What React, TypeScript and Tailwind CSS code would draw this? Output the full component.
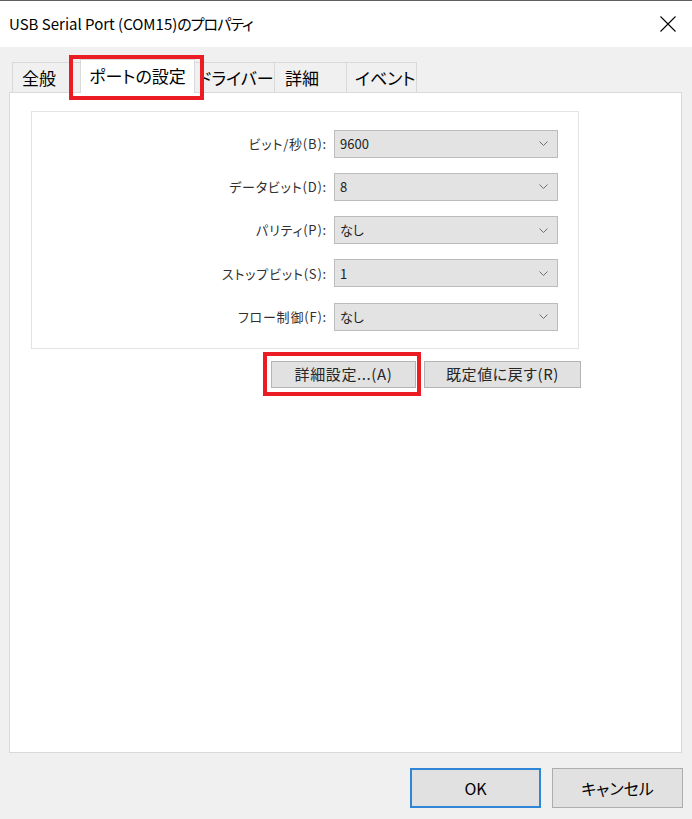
const rows = [
  { label: "ビット/秒(B):", value: "9600" },
  { label: "データビット(D):", value: "8" },
  { label: "パリティ(P):", value: "なし" },
  { label: "ストップビット(S):", value: "1" },
  { label: "フロー制御(F):", value: "なし" },
];

function Chevron() {
  return (
    <svg width="9" height="5" viewBox="0 0 9 5" fill="none">
      <path d="M0.5 0.5L4.5 4.5L8.5 0.5" stroke="#707070" strokeWidth="1" />
    </svg>
  );
}

function Combo({ value }: { value: string }) {
  return (
    <div className="flex h-[28px] w-[224px] items-center justify-between border border-[#bcbcbc] bg-[#e3e3e3] pl-[5px] pr-[9px] text-[13px] text-[#1e1e1e]">
      <span>{value}</span>
      <Chevron />
    </div>
  );
}

export default function App() {
  return (
    <div className="flex h-[819px] w-[692px] flex-col bg-[#f0f0f0] font-['Noto_Sans_CJK_JP',sans-serif] text-black [font-feature-settings:'palt']">
      {/* title bar */}
      <div className="flex h-[47px] shrink-0 items-center justify-between border-t border-[#5f5f5f] bg-white pl-[9px] pr-[16px]">
        <span className="text-[15px]">
          USB Serial Port (COM15)<span className="tracking-[-1px]">のプロパティ</span>
        </span>
        <svg width="16" height="16" viewBox="0 0 16 16" fill="none">
          <path d="M0.5 0.5L15.5 15.5M15.5 0.5L0.5 15.5" stroke="#000" strokeWidth="1.1" />
        </svg>
      </div>

      {/* tabs */}
      <div className="mt-[12px] flex h-[33px] shrink-0 items-end pl-[12px] text-[17px]">
        <div className="flex h-[30px] w-[68px] items-center border-l border-t border-[#d9d9d9] pl-[9px]">
          全般
        </div>
        <div className="relative z-10 mb-[-1px] flex h-[34px] w-[115px] items-center justify-center border-x border-t border-[#d9d9d9] bg-white pb-[2px]">
          ポートの設定
          <div className="absolute left-[-12px] top-[-5px] h-[45px] w-[135px] border-4 border-[#ec1c24]" />
        </div>
        <div className="flex h-[30px] w-[79px] items-center border-t border-[#d9d9d9] pl-[3px]">
          ドライバー
        </div>
        <div className="flex h-[30px] w-[72px] items-center border-l border-t border-[#d9d9d9] pl-[10px]">
          詳細
        </div>
        <div className="flex h-[30px] w-[71px] items-center border-x border-t border-[#d9d9d9] pl-[8px]">
          イベント
        </div>
      </div>

      {/* page */}
      <div className="ml-[9px] mr-[10px] flex flex-1 flex-col border border-[#d9d9d9] bg-white">
        <div className="ml-[21px] mt-[18px] flex w-[548px] flex-col gap-[15.3px] border border-[#e3e3e3] pb-[17px] pr-[20px] pt-[17.5px]">
          {rows.map((r) => (
            <div key={r.label} className="flex items-center justify-end gap-[7px]">
              <span className="text-[13px] tracking-[0.8px] text-[#303030]">{r.label}</span>
              <Combo value={r.value} />
            </div>
          ))}
        </div>

        <div className="mt-[12px] flex justify-end gap-[8px] pr-[100px] text-[15px] text-[#262626]">
          <div className="relative">
            <button className="flex h-[27px] w-[145px] items-center justify-center border border-[#b4b4b4] bg-[#e1e1e1] tracking-[0.6px]">
              詳細設定...(A)
            </button>
            <div className="absolute left-[-8px] top-[-9px] h-[44px] w-[158px] border-4 border-[#ec1c24]" />
          </div>
          <button className="flex h-[27px] w-[157px] items-center justify-center border border-[#b4b4b4] bg-[#e1e1e1] tracking-[0.6px]">
            既定値に戻す(R)
          </button>
        </div>
      </div>

      {/* dialog buttons */}
      <div className="mb-[11px] mt-[15px] flex shrink-0 justify-end gap-[11px] pr-[9px] text-[16px]">
        <button className="flex h-[40px] w-[131px] items-center justify-center border-2 border-[#2f86d6] bg-[#e1e1e1]">
          OK
        </button>
        <button className="flex h-[40px] w-[131px] items-center justify-center border border-[#adadad] bg-[#e1e1e1]">
          キャンセル
        </button>
      </div>
    </div>
  );
}
